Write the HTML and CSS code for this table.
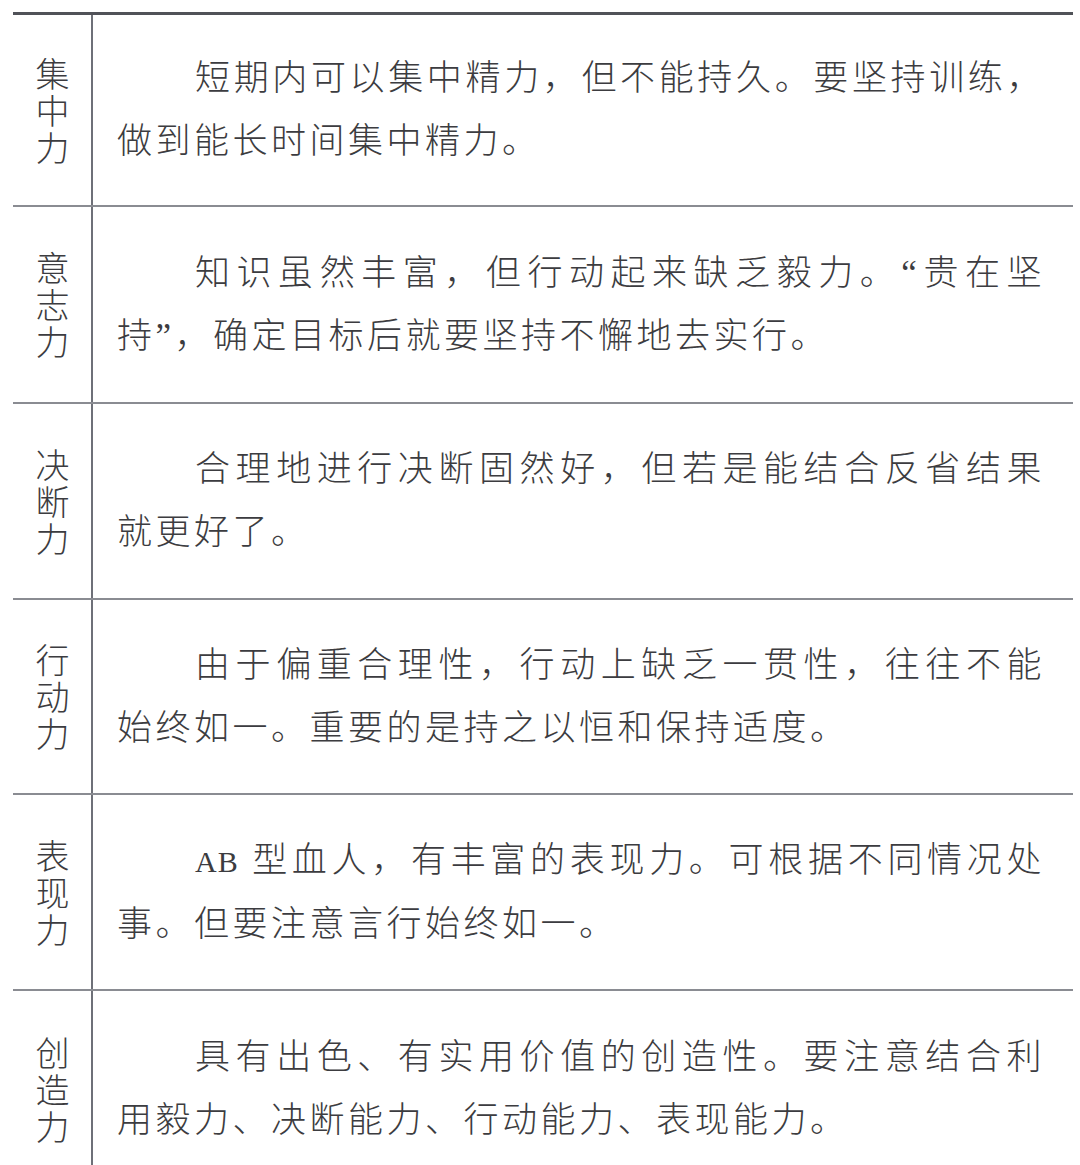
FILE: index.html
```html
<!DOCTYPE html>
<html lang="zh-CN">
<head>
<meta charset="utf-8">
<title>血型性格</title>
<link rel="stylesheet" href="styles.css">
</head>
<body>
<div class="sheet">
  <div class="table">
    <div class="row">
      <div class="label">集中力</div>
      <div class="desc">
        <div class="first">短期内可以集中精力，但不能持久。要坚持训练，</div>
        <div class="rest">做到能长时间集中精力。</div>
      </div>
    </div>
    <div class="row">
      <div class="label">意志力</div>
      <div class="desc">
        <div class="first">知识虽然丰富，但行动起来缺乏毅力。“贵在坚</div>
        <div class="rest">持”，确定目标后就要坚持不懈地去实行。</div>
      </div>
    </div>
    <div class="row">
      <div class="label">决断力</div>
      <div class="desc">
        <div class="first">合理地进行决断固然好，但若是能结合反省结果</div>
        <div class="rest">就更好了。</div>
      </div>
    </div>
    <div class="row">
      <div class="label">行动力</div>
      <div class="desc">
        <div class="first">由于偏重合理性，行动上缺乏一贯性，往往不能</div>
        <div class="rest">始终如一。重要的是持之以恒和保持适度。</div>
      </div>
    </div>
    <div class="row">
      <div class="label">表现力</div>
      <div class="desc">
        <div class="first"><span class="latin">AB</span> 型血人，有丰富的表现力。可根据不同情况处</div>
        <div class="rest">事。但要注意言行始终如一。</div>
      </div>
    </div>
    <div class="row">
      <div class="label">创造力</div>
      <div class="desc">
        <div class="first">具有出色、有实用价值的创造性。要注意结合利</div>
        <div class="rest">用毅力、决断能力、行动能力、表现能力。</div>
      </div>
    </div>
  </div>
</div>
</body>
</html>
```

FILE: styles.css
```css
html, body {
  margin: 0;
  padding: 0;
  background: #ffffff;
  overflow: hidden;
}

.sheet {
  padding: 12px 7px 0 13px;
  width: 1060px;
}

.table {
  border-top: 3px solid #505258;
  display: grid;
  grid-template-rows: 192px 197px 196px 195px 196px 196px;
  font-family: "Liberation Serif", "Noto Sans CJK SC", serif;
  color: #3c3c40;
}

.row {
  display: grid;
  grid-template-columns: 78px 2px 1fr;
  border-bottom: 2px solid #8a8c92;
  box-sizing: border-box;
}

.row:last-child {
  border-bottom: none;
}

.row::before {
  content: "";
  grid-column: 2;
  grid-row: 1;
  background: #6e7078;
}

.label {
  grid-column: 1;
  grid-row: 1;
  align-self: center;
  justify-self: center;
  writing-mode: vertical-rl;
  text-orientation: upright;
  font-family: "Noto Sans CJK SC", sans-serif;
  font-weight: 300;
  font-size: 34px;
  line-height: 36px;
  letter-spacing: 3px;
  padding-top: 4px;
}

.desc {
  grid-column: 3;
  grid-row: 1;
  align-self: center;
  padding: 0 28px 0 24px;
  font-weight: 300;
  font-size: 35px;
  line-height: 63px;
  letter-spacing: 3.5px;
}

.first {
  text-indent: 78px;
  text-align: justify;
  text-align-last: justify;
  white-space: nowrap;
}

.rest {
  white-space: nowrap;
}

.latin {
  font-size: 30px;
  letter-spacing: 1px;
}
```
